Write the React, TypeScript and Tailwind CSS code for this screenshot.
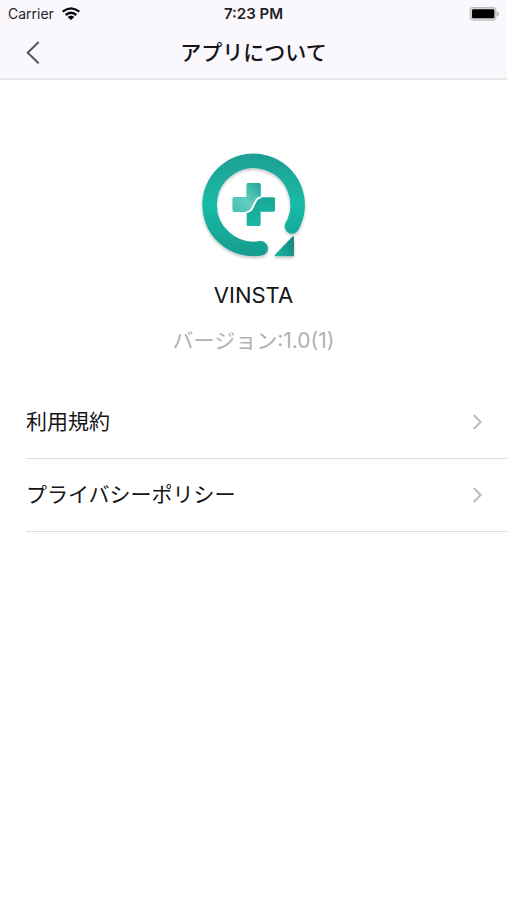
const links = [
  { label: '利用規約', href: '#terms' },
  { label: 'プライバシーポリシー', href: '#privacy' },
]

function StatusBar() {
  return (
    <div className="grid h-7 grid-cols-3 items-center px-2 text-[#222226]">
      <div className="flex items-center gap-2 text-sm">
        <span>Carrier</span>
        <svg className="h-3.5 w-[18px]" viewBox="0 0 54 42" fill="none" stroke="#050507" strokeWidth="7">
          <path d="M2 14Q27 -6 52 14" />
          <path d="M11 24Q27 10 43 24" />
          <path d="M27 39L17 30Q27 21 37 30Z" fill="#050507" stroke="none" />
        </svg>
      </div>
      <div className="text-center text-[15px] font-semibold">7:23 PM</div>
      <svg className="h-4 w-[30px] justify-self-end" viewBox="0 0 90 48">
        <rect x="2" y="3" width="80" height="41" rx="10" fill="#bdbcbf" />
        <rect x="5" y="6" width="74" height="35" rx="8" fill="#d6d5d8" />
        <rect x="9" y="10" width="67" height="27" rx="4" fill="#000" />
        <path d="M83 16Q90 19 90 24T83 32Z" fill="#b5b4b7" />
      </svg>
    </div>
  )
}

function Logo() {
  return (
    <svg className="size-[130px]" viewBox="-4 -1 390 390" fill="none" role="img" aria-label="VINSTA">
      <defs>
        <linearGradient id="ring" x1="0" y1="38" x2="0" y2="350" gradientUnits="userSpaceOnUse">
          <stop offset="0" stopColor="#1e9f93" />
          <stop offset="0.5" stopColor="#19bba5" />
          <stop offset="1" stopColor="#179b8f" />
        </linearGradient>
        <linearGradient id="arrow" x1="255" y1="340" x2="315" y2="310" gradientUnits="userSpaceOnUse">
          <stop offset="0" stopColor="#1cb5a1" />
          <stop offset="1" stopColor="#13877e" />
        </linearGradient>
        <linearGradient id="cross" x1="180" y1="128" x2="205" y2="258" gradientUnits="userSpaceOnUse">
          <stop offset="0" stopColor="#159e90" />
          <stop offset="1" stopColor="#1bb8a4" />
        </linearGradient>
        <linearGradient id="shine" x1="126" y1="215" x2="211" y2="128" gradientUnits="userSpaceOnUse">
          <stop offset="0" stopColor="#3cbfaf" />
          <stop offset="0.45" stopColor="#66cdc0" />
          <stop offset="1" stopColor="#1ba797" />
        </linearGradient>
        <filter id="shadow" x="-20%" y="-20%" width="140%" height="140%">
          <feDropShadow dx="0" dy="5" stdDeviation="5" floodColor="#000" floodOpacity="0.25" />
        </filter>
        <clipPath id="crossShape">
          <path d="M175 128H205Q211 128 211 134V171H249Q255 171 255 177V208Q255 214 249 214H211V252Q211 258 205 258H175Q169 258 169 252V214H132Q126 214 126 208V177Q126 171 132 171H169V134Q169 128 175 128Z" />
        </clipPath>
      </defs>
      <g filter="url(#shadow)">
        <path d="M305 258A132 132 0 1 0 211 324" stroke="url(#ring)" strokeWidth="44" strokeLinecap="round" />
        <path d="M308 291V345H256Z" fill="url(#arrow)" stroke="url(#arrow)" strokeWidth="6" strokeLinejoin="round" />
      </g>
      <g clipPath="url(#crossShape)">
        <rect x="126" y="128" width="129" height="130" fill="url(#cross)" />
        <path d="M126 128H211V169C192 172 192 213 169 217H126Z" fill="url(#shine)" />
        <path d="M214 170C184 175 198 212 166 217" stroke="#fff" strokeWidth="6" />
      </g>
    </svg>
  )
}

export default function App() {
  return (
    <div className="min-h-screen bg-white font-[Inter,'Noto_Sans_CJK_JP',sans-serif] text-[#151517]">
      <header className="border-b-2 border-[#e7e6e9] bg-[#faf8fd]">
        <StatusBar />
        <div className="grid h-[50px] grid-cols-[1fr_auto_1fr] items-center px-5">
          <button type="button" aria-label="戻る" className="flex size-6 items-center justify-center">
            <svg className="h-6 w-4" viewBox="0 0 48 72" fill="none" stroke="#55555a" strokeWidth="6">
              <path d="M44 3L11 35L44 67" />
            </svg>
          </button>
          <h1 className="text-[21px] font-medium leading-7">アプリについて</h1>
        </div>
      </header>

      <main>
        <section className="flex flex-col items-center pt-[60px]">
          <Logo />
          <h2 className="mt-2 text-[22px] leading-[34px]">VINSTA</h2>
          <p className="mt-3 text-[21px] leading-[34px] text-[#b0b0b0]">バージョン:1.0(1)</p>
        </section>

        <nav className="mt-7">
          <ul className="pl-[26px]">
            {links.map((link) => (
              <li key={link.href} className="border-b border-[#dedede]">
                <a href={link.href} className="flex h-[72px] items-center justify-between pr-6 text-[21px]">
                  {link.label}
                  <svg className="h-4 w-3" viewBox="0 0 36 48" fill="none" stroke="#bcbcbc" strokeWidth="6">
                    <path d="M8 3L29 24L8 45" />
                  </svg>
                </a>
              </li>
            ))}
          </ul>
        </nav>
      </main>
    </div>
  )
}
